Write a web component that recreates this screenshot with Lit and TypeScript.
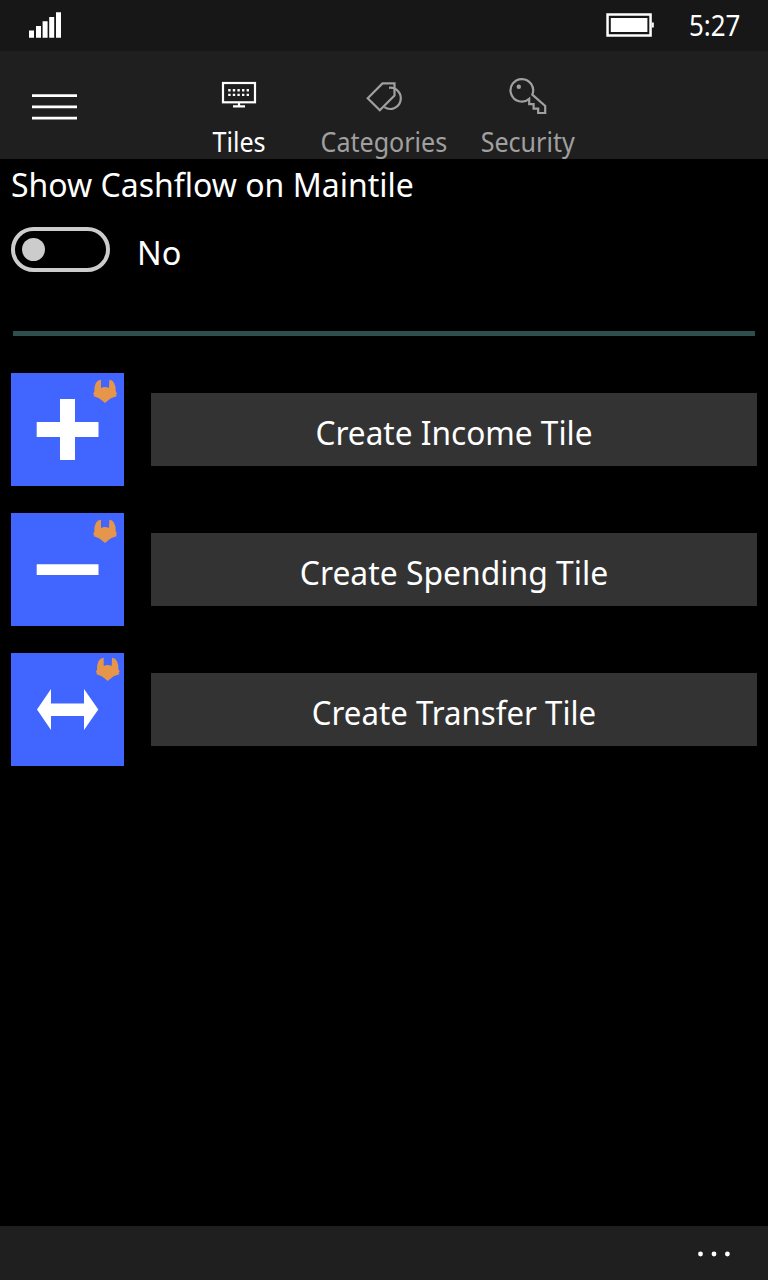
import { LitElement, html, css, svg } from "lit";
import { customElement, property, state } from "lit/decorators.js";

const tabIcons: Record<string, unknown> = {
  tiles: svg`<svg class="icon" viewBox="215 72 48 48">
    <rect x="223" y="83" width="32" height="19.3"/>
    <path d="M239 102v4M233 106.3h12"/>
    <path class="dots" d="M228.2 90.3h21M228.2 94.9h21"/>
  </svg>`,
  categories: svg`<svg class="icon" viewBox="359 72 48 48">
    <path d="M367.7 98.2L382.5 83.4H394.5V95.6L379.8 110.3Z"/>
    <path d="M389 87.8A10.6 10.6 0 1 1 384.4 107.2"/>
  </svg>`,
  security: svg`<svg class="icon" viewBox="503 72 48 48">
    <path d="M532.3 94.6L545.2 106V113H538.2V108.6H533.6V104.2H529.2V98.9A11.3 11.3 0 1 1 532.3 94.6Z"/>
    <circle class="solid" cx="518.8" cy="86.8" r="2.2"/>
  </svg>`,
};

const tileGlyphs: Record<string, unknown> = {
  income: svg`<path d="M49 26H64V49H87.5V64H64V87H49V64H25.7V49H49Z"/>`,
  spending: svg`<path d="M25.7 51.2H87.5V62H25.7Z"/>`,
  transfer: svg`<path d="M26 56.5L40 36V50.4H73V36L87.3 56.5L73 77V63H40V77Z"/>`,
};

@customElement("live-tile")
class LiveTile extends LitElement {
  @property() kind = "income";
  static styles = css`
    :host { display: block; width: 113px; height: 113px; background: #4066ff; }
    svg { display: block; }
    .glyph { fill: #fff; }
    .fox { fill: #e6964a; }
  `;
  render() {
    const shift = this.kind === "transfer" ? "translate(2.7 -2)" : "";
    return html`<svg width="113" height="113" viewBox="0 0 113 113">
      <g class="glyph">${tileGlyphs[this.kind]}</g>
      <g class="fox" transform=${shift}>
        <path transform="scale(.33333) translate(-33 -24)" d="M315 114L307 107L297 100L280 93L284 90L279 87L283 80Q282 64 288 53Q294 44 303 44L303 69Q315 63 327 69L328 44Q337 44 342 53Q348 64 347 78L351 86L347 89L351 93L333 100L323 107Z"/>
      </g>
    </svg>`;
  }
}

@customElement("app-root")
class AppRoot extends LitElement {
  @state() private active = "tiles";
  static styles = css`
    :host {
      display: flex; flex-direction: column; width: 768px; height: 1280px;
      background: #000; color: #fff; overflow: hidden;
      font-family: "Noto Sans", "Open Sans", sans-serif; font-size: 33.5px;
    }
    svg { display: block; flex: none; }
    .status { height: 51px; background: #171717; display: flex; fill: #fff; }
    .spacer { flex: 1; }
    .clock {
      width: 52px; margin: 0 27px 0 33px; font-size: 28.5px; line-height: 50px; white-space: nowrap;
      transform: scaleX(.91); transform-origin: left;
    }
    .header { height: 108px; background: #1f1f1f; display: flex; }
    .menu { width: 167px; fill: #fff; }
    .tabs { display: flex; }
    .tab {
      width: 144px; padding-top: 21px; box-sizing: border-box; color: #a0a0a0;
      display: flex; flex-direction: column; align-items: center;
      font-size: 26.5px; line-height: 44px; white-space: nowrap;
    }
    .tab.active { color: #fff; }
    .label { display: block; transform: scaleX(.946); }
    .label-categories, .label-security { padding-left: 2px; }
    .icon { width: 48px; height: 48px; fill: none; stroke: currentColor; stroke-width: 2.2; }
    .solid { fill: currentColor; stroke: none; }
    .dots { stroke-width: 2.4; stroke-dasharray: 2.4 2.2; }
    .content { flex: 1; padding: 0 11px; }
    .title { height: 68px; line-height: 51px; white-space: nowrap; transform: scaleX(.955); transform-origin: left; }
    .switch { display: flex; height: 45px; gap: 27px; }
    .track {
      width: 99px; height: 45px; box-sizing: border-box; border: 4.5px solid #ccc;
      border-radius: 23px; display: flex; align-items: center; padding-left: 7px;
    }
    .knob { width: 23px; height: 23px; border-radius: 50%; background: #ccc; }
    .state { line-height: 51px; transform: scaleX(.97); transform-origin: left; }
    .rule { height: 5px; margin: 59px 2px 37px; background: #2f4f4f; }
    .rows { display: flex; flex-direction: column; gap: 27px; }
    .row { display: flex; align-items: center; gap: 27px; }
    .button { flex: 1; height: 73px; background: #333; text-align: center; line-height: 79px; white-space: nowrap; }
    .caption { display: block; }
    .income { transform: scaleX(.943); }
    .spending { transform: scaleX(.951); }
    .transfer { transform: scaleX(.932); }
    .bar { height: 54px; background: #1f1f1f; display: flex; justify-content: flex-end; fill: #fff; }
  `;

  private tabs = [
    { id: "tiles", label: "Tiles" },
    { id: "categories", label: "Categories" },
    { id: "security", label: "Security" },
  ];
  private rows = [
    { kind: "income", label: "Create Income Tile" },
    { kind: "spending", label: "Create Spending Tile" },
    { kind: "transfer", label: "Create Transfer Tile" },
  ];

  render() {
    return html`
      <div class="status">
        <svg width="80" height="51" viewBox="0 0 80 51">
          <path d="M29 30.5h5v7.2h-5zM36 26h5v11.7h-5zM42.6 21.3h5v16.4h-5zM49.2 17h5v20.7h-5zM56 12.3h5v25.4h-5z"/>
        </svg>
        <div class="spacer"></div>
        <svg width="56" height="51" viewBox="600 0 56 51">
          <path fill-rule="evenodd" d="M606.3 13.3h45.5v23.4h-45.5zM608.8 15.8v18.4h40.5v-18.4z"/>
          <path d="M610.8 18h36.6v14h-36.6zM651.8 22.6h2v4.8h-2z"/>
        </svg>
        <div class="clock">5:27</div>
      </div>
      <div class="header">
        <svg class="menu" width="167" height="108" viewBox="0 51 167 108">
          <path d="M32 94.2h45v2.8h-45zM32 105.4h45v2.8h-45zM32 116.7h45v2.8h-45z"/>
        </svg>
        <div class="tabs">
          ${this.tabs.map((t) => html`
            <div class="tab ${t.id === this.active ? "active" : ""}" @click=${() => (this.active = t.id)}>
              ${tabIcons[t.id]}<span class="label label-${t.id}">${t.label}</span>
            </div>`)}
        </div>
      </div>
      <div class="content">
        <div class="title">Show Cashflow on Maintile</div>
        <div class="switch">
          <div class="track"><div class="knob"></div></div>
          <div class="state">No</div>
        </div>
        <div class="rule"></div>
        <div class="rows">
          ${this.rows.map((r) => html`
            <div class="row"><live-tile kind=${r.kind}></live-tile><div class="button"><span class="caption ${r.kind}">${r.label}</span></div></div>`)}
        </div>
      </div>
      <div class="bar">
        <svg width="108" height="54" viewBox="660 1226 108 54">
          <circle cx="700.5" cy="1254" r="2.4"/><circle cx="714" cy="1254" r="2.4"/><circle cx="727.4" cy="1254" r="2.4"/>
        </svg>
      </div>`;
  }
}
